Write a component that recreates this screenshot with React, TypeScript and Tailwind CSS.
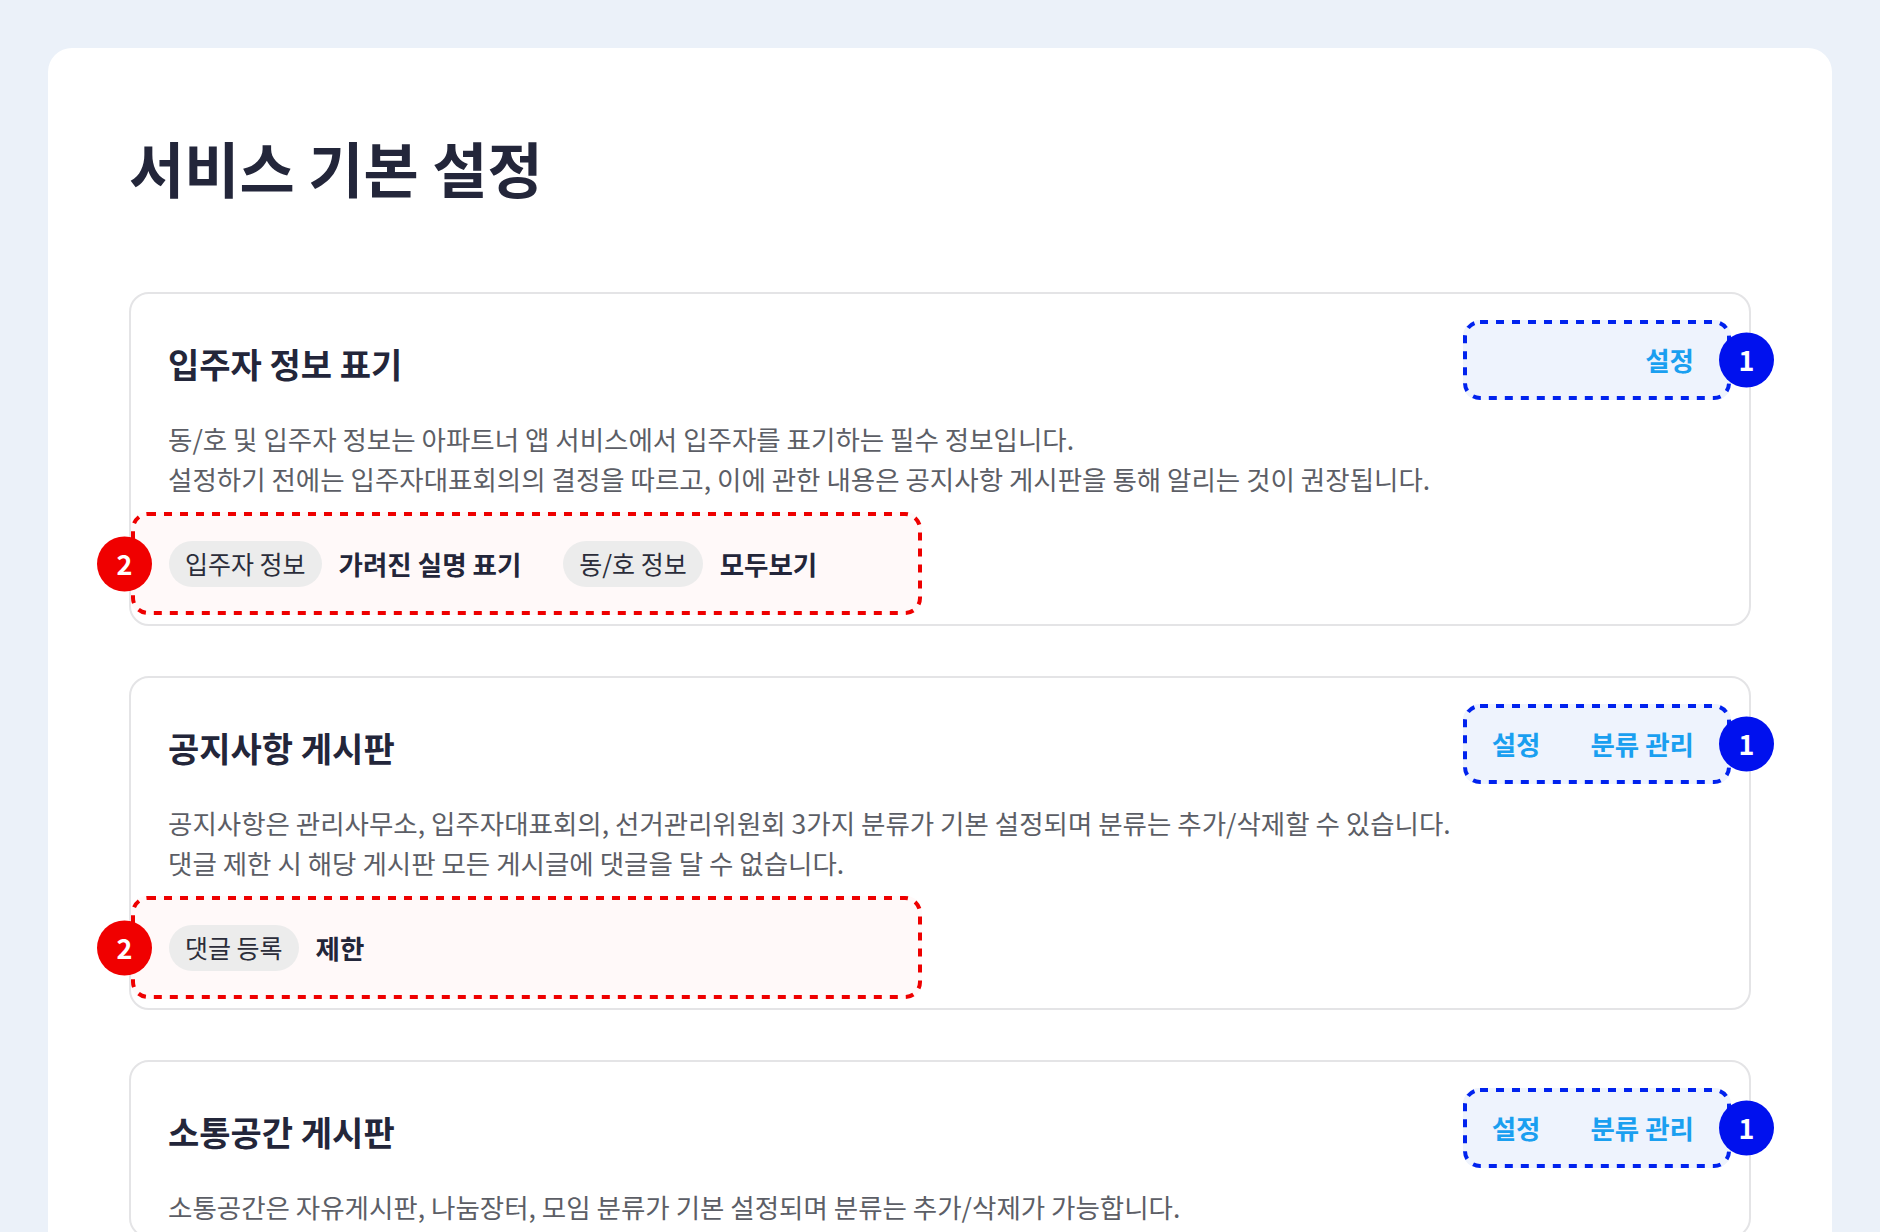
import React from "react";

type Option = { label: string; value: string };

interface SettingCardProps {
  title: string;
  lines: string[];
  actions: string[];
  options?: Option[];
}

const Marker = ({ n, color }: { n: number; color: "red" | "blue" }) => (
  <span
    className={
      "flex h-[55px] w-[55px] items-center justify-center rounded-full text-[27px] font-bold text-white " +
      (color === "red" ? "bg-[#f00000]" : "bg-[#0011ee]")
    }
  >
    {n}
  </span>
);

// dashed annotation outline, drawn so dash length matches the mockup
const DashedFrame = ({ w, h, color }: { w: number; h: number; color: string }) => (
  <svg className="pointer-events-none absolute left-0 top-0" width={w} height={h}>
    <rect x={2} y={2} width={w - 4} height={h - 4} rx={15} fill="none" stroke={color} strokeWidth={4} strokeDasharray="8 8" />
  </svg>
);

const SettingCard: React.FC<SettingCardProps> = ({ title, lines, actions, options }) => {
  return (
    <section className="rounded-[20px] border-2 border-[#e4e4e6] bg-white pl-[37px] pr-[18px] pt-[26px] pb-[9px]">
      <div className="flex items-center justify-between">
        <h2 className="pt-[7px] text-[34px] font-bold leading-none text-[#23263a]">{title}</h2>
        <div className="relative flex h-[80px] w-[268px] items-center justify-end gap-[50px] rounded-[16px] bg-[#eef3fd] pr-[37px]">
          <DashedFrame w={268} h={80} color="#0022ee" />
          {actions.map((a) => (
            <button key={a} className="relative text-[26.5px] font-bold text-[#1a9ff0]">
              {a}
            </button>
          ))}
          <div className="absolute right-[-43px] top-1/2 -translate-y-1/2">
            <Marker n={1} color="blue" />
          </div>
        </div>
      </div>
      <div className="mt-[19px] text-[26.5px] leading-[40px] text-[#5c5e66]">
        {lines.map((l) => (
          <p key={l}>{l}</p>
        ))}
      </div>
      {options && (
        <div className="relative ml-[-37px] mt-[13px] flex h-[103px] w-[791px] items-center gap-[42px] rounded-[16px] bg-[#fff9f9] pl-[38px]">
          <DashedFrame w={791} h={103} color="#ee0000" />
          <div className="absolute left-[-34px] top-1/2 -translate-y-1/2">
            <Marker n={2} color="red" />
          </div>
          {options.map((o) => (
            <div key={o.label} className="relative flex items-center gap-[17px]">
              <span className="flex h-[46px] items-center rounded-full bg-[#ececec] px-[16px] text-[25px] text-[#2b2d3a]">
                {o.label}
              </span>
              <span className="text-[26.5px] font-bold text-[#23263a]">{o.value}</span>
            </div>
          ))}
        </div>
      )}
    </section>
  );
};

export default function App() {
  return (
    <div
      className="h-[1232px] overflow-hidden bg-[#ebf1f9] px-[48px] pt-[48px]"
      style={{ fontFamily: '"Noto Sans CJK KR", "Noto Sans", sans-serif' }}
    >
      <main className="rounded-[24px] bg-white px-[81px] pt-[83px] pb-[60px]">
        <h1 className="text-[60px] font-bold leading-[1.2] text-[#23263a]">서비스 기본 설정</h1>
        <div className="mt-[89px] flex flex-col gap-[50px]">
          <SettingCard
            title="입주자 정보 표기"
            lines={[
              "동/호 및 입주자 정보는 아파트너 앱 서비스에서 입주자를 표기하는 필수 정보입니다.",
              "설정하기 전에는 입주자대표회의의 결정을 따르고, 이에 관한 내용은 공지사항 게시판을 통해 알리는 것이 권장됩니다.",
            ]}
            actions={["설정"]}
            options={[
              { label: "입주자 정보", value: "가려진 실명 표기" },
              { label: "동/호 정보", value: "모두보기" },
            ]}
          />
          <SettingCard
            title="공지사항 게시판"
            lines={[
              "공지사항은 관리사무소, 입주자대표회의, 선거관리위원회 3가지 분류가 기본 설정되며 분류는 추가/삭제할 수 있습니다.",
              "댓글 제한 시 해당 게시판 모든 게시글에 댓글을 달 수 없습니다.",
            ]}
            actions={["설정", "분류 관리"]}
            options={[{ label: "댓글 등록", value: "제한" }]}
          />
          <SettingCard
            title="소통공간 게시판"
            lines={["소통공간은 자유게시판, 나눔장터, 모임 분류가 기본 설정되며 분류는 추가/삭제가 가능합니다."]}
            actions={["설정", "분류 관리"]}
          />
        </div>
      </main>
    </div>
  );
}
